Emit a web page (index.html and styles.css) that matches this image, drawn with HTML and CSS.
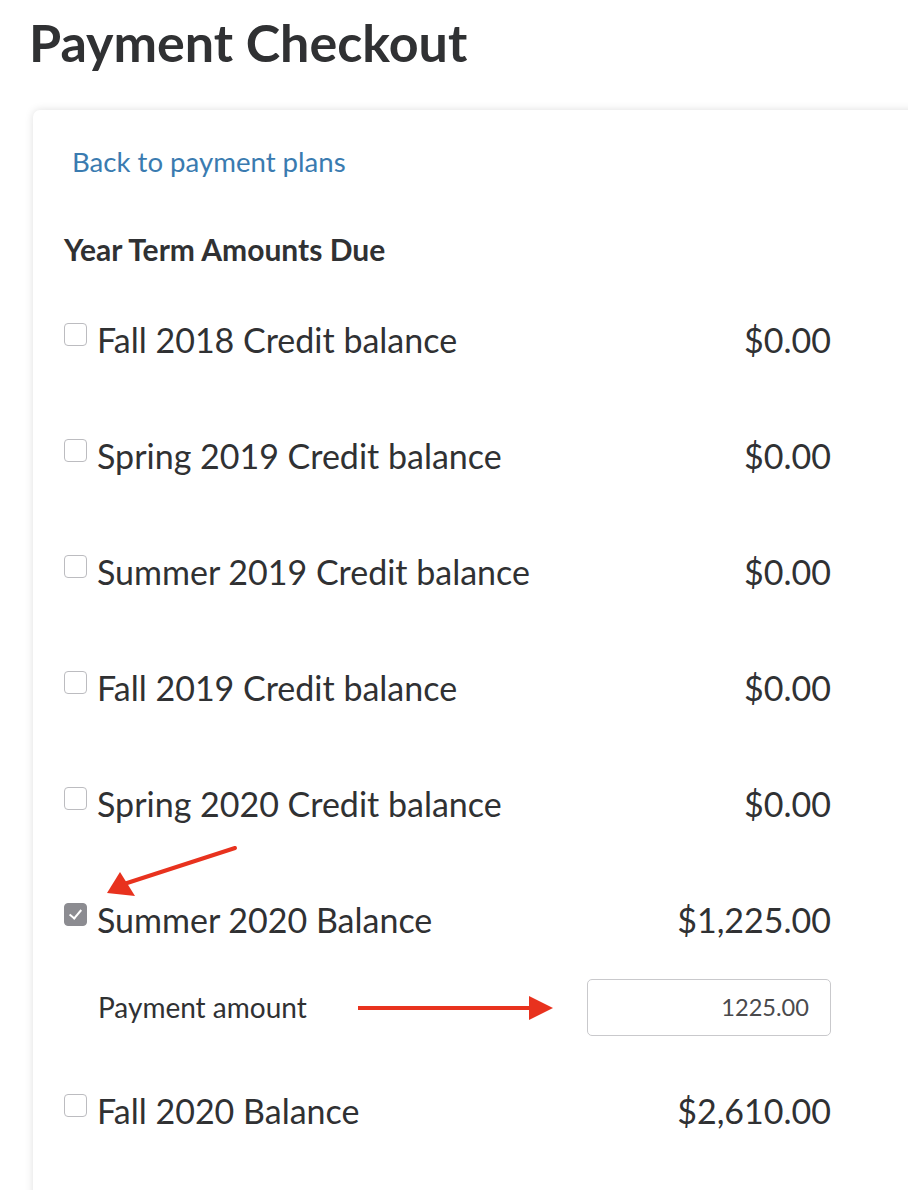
FILE: index.html
```html
<!DOCTYPE html>
<html lang="en">
<head>
<meta charset="utf-8">
<title>Payment Checkout</title>
<link rel="stylesheet" href="styles.css">
</head>
<body>
<div class="page">
  <h1 class="title">Payment Checkout</h1>
  <div class="card">
    <div class="content">
      <a class="back-link" href="#">Back to payment plans</a>
      <h2 class="section-heading">Year Term Amounts Due</h2>
      <div class="rows">
        <label class="row"><input type="checkbox" class="check"><span class="term">Fall 2018 Credit balance</span><span class="amount">$0.00</span></label>
        <label class="row"><input type="checkbox" class="check"><span class="term">Spring 2019 Credit balance</span><span class="amount">$0.00</span></label>
        <label class="row"><input type="checkbox" class="check"><span class="term">Summer 2019 Credit balance</span><span class="amount">$0.00</span></label>
        <label class="row"><input type="checkbox" class="check"><span class="term">Fall 2019 Credit balance</span><span class="amount">$0.00</span></label>
        <label class="row"><input type="checkbox" class="check"><span class="term">Spring 2020 Credit balance</span><span class="amount">$0.00</span></label>
        <label class="row"><input type="checkbox" class="check" checked><span class="term">Summer 2020 Balance</span><span class="amount">$1,225.00</span></label>
        <div class="payment-row">
          <span class="payment-label">Payment amount</span>
          <input class="payment-input" type="text" value="1225.00">
        </div>
        <label class="row row-last"><input type="checkbox" class="check"><span class="term">Fall 2020 Balance</span><span class="amount">$2,610.00</span></label>
      </div>
    </div>
  </div>
  <svg class="annotations" width="908" height="1190" viewBox="0 0 908 1190" aria-hidden="true">
    <line x1="235" y1="848" x2="124" y2="884" stroke="#e8321e" stroke-width="4" stroke-linecap="round"/>
    <polygon points="107,893 120,872 135,896" fill="#e8321e"/>
    <line x1="358" y1="1008" x2="534" y2="1008" stroke="#e8321e" stroke-width="4"/>
    <polygon points="529,996 553,1008 529,1020" fill="#e8321e"/>
  </svg>
</div>
</body>
</html>
```
FILE: styles.css
```css
html, body {
  margin: 0;
  padding: 0;
  background: #ffffff;
}

body {
  width: 908px;
  height: 1190px;
  overflow: hidden;
  font-family: Lato, "Open Sans", "Liberation Sans", sans-serif;
  color: #303133;
}

.page {
  position: relative;
  width: 908px;
  height: 1190px;
  overflow: hidden;
}

.title {
  margin: 0;
  padding: 10px 0 0 29px;
  height: 52px;
  line-height: 64px;
  font-size: 52px;
  font-weight: 700;
  color: #303133;
  letter-spacing: 0;
}

.card {
  margin: 48px 0 0 33px;
  width: 920px;
  height: 1100px;
  background: #fff;
  border-radius: 7px;
  box-shadow: 0 0 8px rgba(0, 0, 0, 0.13);
}

.content {
  width: 767px;
  padding: 30px 0 0 31px;
}

.back-link {
  display: block;
  margin-left: 8px;
  height: 44px;
  line-height: 44px;
  font-size: 27.6px;
  color: #3a7bb0;
  text-decoration: none;
}

.section-heading {
  margin: 45px 0 0 0;
  height: 40px;
  line-height: 40px;
  font-size: 30px;
  font-weight: 700;
  color: #303133;
}

.rows {
  margin-top: 12px;
  display: flex;
  flex-direction: column;
}

.row {
  display: flex;
  align-items: center;
  height: 116px;
  font-size: 34px;
}

.row-last {
  margin-top: 15px;
}

.check {
  appearance: none;
  -webkit-appearance: none;
  margin: 0 10px 10px 0;
  width: 23px;
  height: 23px;
  flex: none;
  box-sizing: border-box;
  border: 1px solid #bcbcc0;
  border-radius: 4px;
  background: #fff;
  position: relative;
}

.check:checked {
  background: #8c8c91;
  border-color: #8c8c91;
}

.check:checked::after {
  content: "";
  position: absolute;
  left: 7px;
  top: 3px;
  width: 5px;
  height: 10px;
  border-right: 2px solid #fff;
  border-bottom: 2px solid #fff;
  transform: rotate(40deg);
}

.term {
  flex: 1;
}

.amount {
  text-align: right;
}

.payment-row {
  display: flex;
  align-items: center;
  justify-content: space-between;
  height: 60px;
  padding-left: 34px;
}

.payment-label {
  font-size: 28px;
  color: #303133;
}

.payment-input {
  box-sizing: border-box;
  width: 244px;
  height: 57px;
  border: 1.5px solid #c9c9cc;
  border-radius: 5px;
  padding: 0 21px 0 10px;
  font-family: Lato, "Open Sans", "Liberation Sans", sans-serif;
  font-size: 23.6px;
  color: #4a4a4d;
  text-align: right;
  background: #fff;
  outline: none;
}

.annotations {
  position: absolute;
  left: 0;
  top: 0;
  pointer-events: none;
}
```
